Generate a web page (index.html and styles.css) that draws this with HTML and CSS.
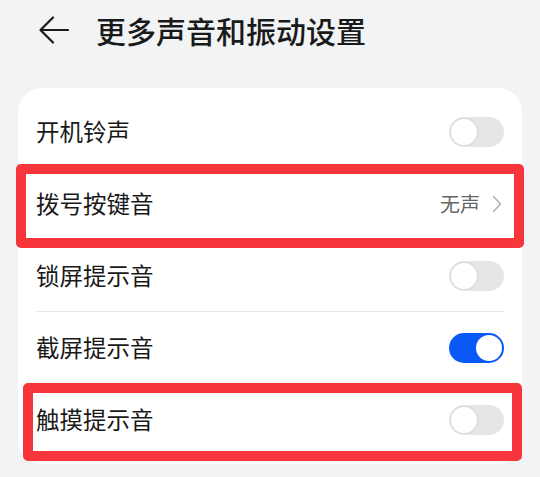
FILE: index.html
```html
<!DOCTYPE html>
<html>
 <head>
  <meta charset="utf-8">
  <title>更多声音和振动设置</title>
  <link rel="stylesheet" href="styles.css">
 </head>
 <body>
  <div class="page">
    <div class="header">
      <svg class="back" width="30" height="30" viewBox="0 0 30 30">
        <path d="M14 2.5 L1.5 15 L14 27.5 M1.5 15 H29" fill="none" stroke="#1a1a1a" stroke-width="2.2" stroke-linecap="round" stroke-linejoin="round"/>
      </svg>
      <h1 class="title">更多声音和振动设置</h1>
    </div>

    <div class="card">
      <div class="row">
        <span class="label">开机铃声</span>
        <span class="switch"></span>
      </div>
      <div class="row">
        <span class="label">拨号按键音</span>
        <span class="value">无声
          <svg class="arrow" width="10" height="18" viewBox="0 0 10 18">
            <path d="M1.5 1.5 L8.5 9 L1.5 16.5" fill="none" stroke="#b3b3b3" stroke-width="1.6" stroke-linecap="round" stroke-linejoin="round"/>
          </svg>
        </span>
      </div>
      <div class="row">
        <span class="label">锁屏提示音</span>
        <span class="switch"></span>
      </div>
      <div class="row">
        <span class="label">截屏提示音</span>
        <span class="switch on"></span>
      </div>
      <div class="row last">
        <span class="label">触摸提示音</span>
        <span class="switch"></span>
      </div>
    </div>

    <div class="mark mark-one"></div>
    <div class="mark mark-two"></div>
  </div>
 </body>
</html>
```

FILE: styles.css
```css
* {
  margin: 0;
  padding: 0;
  box-sizing: border-box;
}
body {
  background: #f1f3f5;
  font-family: "Noto Sans CJK SC", "Noto Sans", sans-serif;
  color: #191919;
}
.page {
  position: relative;
  width: 540px;
  height: 477px;
  overflow: hidden;
}
.header {
  height: 88px;
  display: flex;
  align-items: center;
  padding: 0 0 28px 39px;
}
.back {
  display: block;
}
.title {
  margin-left: 27px;
  font-size: 30px;
  font-weight: 500;
  line-height: 1;
  color: #1a1a1a;
}

.card {
  margin: 0 18px;
  padding: 8px 18px;
  background: #fff;
  border-radius: 24px;
}
.row {
  height: 72px;
  display: flex;
  align-items: center;
  justify-content: space-between;
  border-bottom: 1px solid #e6e6e6;
}
.row.last {
  border-bottom: none;
}
.label {
  font-size: 23.5px;
  line-height: 1;
}
.value {
  display: flex;
  align-items: center;
  gap: 12px;
  font-size: 20px;
  color: #666;
  padding-right: 2px;
}

.switch {
  position: relative;
  width: 55px;
  height: 30px;
  border-radius: 15px;
  background: #e5e5e5;
}
.switch::after {
  content: "";
  position: absolute;
  top: 2px;
  left: 2px;
  width: 26px;
  height: 26px;
  border-radius: 50%;
  background: #fff;
  box-shadow: 0 0 1px 1px rgba(0, 0, 0, 0.06);
}
.switch.on {
  background: #0a59f7;
}
.switch.on::after {
  left: 27px;
  box-shadow: none;
}

.mark {
  position: absolute;
  border: 10px solid #f6363a;
  border-radius: 5px;
}
.mark-one {
  left: 16px;
  top: 164px;
  width: 508px;
  height: 84px;
}
.mark-two {
  left: 23px;
  top: 383px;
  width: 499px;
  height: 78px;
}
```
